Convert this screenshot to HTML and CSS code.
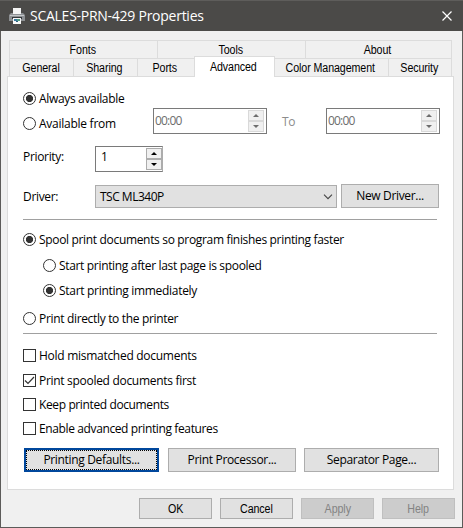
FILE: index.html
```html
<!DOCTYPE html>
<html lang="en">
<head>
<meta charset="utf-8">
<title>SCALES-PRN-429 Properties</title>
<link rel="stylesheet" href="styles.css">
</head>
<body>
<div class="window">
  <header class="titlebar">
    <svg class="printer" width="16" height="16" viewBox="0 0 16 16">
      <rect x="4" y="0" width="8" height="6" fill="#f4f4f4"/>
      <path d="M2 5h2v1h8V5h2l2 2v6H0V7z" fill="#8d9093"/>
      <path d="M1 7h14v1H1z" fill="#c3c5c7"/>
      <rect x="3" y="9" width="10" height="2" fill="#34373a"/>
      <rect x="4" y="10" width="8" height="6" fill="#f7f7f7"/>
      <rect x="5" y="11" width="3" height="2" fill="#3c78a0"/>
      <rect x="8" y="11" width="3" height="2" fill="#4f9b82"/>
      <rect x="7" y="13" width="2" height="1" fill="#2f5f80"/>
    </svg>
    <h1 class="title">SCALES-PRN-429 Properties</h1>
    <svg class="close" width="10" height="10" viewBox="0 0 10 10"><path d="M.5.5l9 9M9.500.5l-9 9" stroke="#fff" stroke-width="1.2"/></svg>
  </header>
  <nav class="tabs">
    <div class="tabrow back">
      <span class="tab"><span class="cap">Fonts</span></span><span class="tab"><span class="cap">Tools</span></span><span class="tab"><span class="cap">About</span></span>
    </div>
    <div class="tabrow front">
      <span class="tab"><span class="cap">General</span></span><span class="tab"><span class="cap">Sharing</span></span><span class="tab"><span class="cap">Ports</span></span><span class="tab active"><span class="cap">Advanced</span></span><span class="tab"><span class="cap">Color Management</span></span><span class="tab"><span class="cap">Security</span></span>
    </div>
  </nav>
  <main class="panel">
    <label class="option"><i class="radio on"></i><span>Always available</span></label>
    <div class="row times">
      <label class="option from"><i class="radio"></i><span>Available from</span></label>
      <div class="time"><span>00:00</span><div class="spin dim"><b class="up"></b><b class="down"></b></div></div>
      <span class="to">To</span>
      <div class="time"><span>00:00</span><div class="spin dim"><b class="up"></b><b class="down"></b></div></div>
    </div>
    <div class="row priority">
      <span class="name">Priority:</span>
      <div class="number"><span>1</span><div class="spin"><b class="up"></b><b class="down"></b></div></div>
    </div>
    <div class="row driver">
      <span class="name">Driver:</span>
      <div class="select"><span>TSC ML340P</span><svg width="10" height="6" viewBox="0 0 10 6"><path d="M1 .7l4 4 4-4" fill="none" stroke="#444" stroke-width="1.1"/></svg></div>
      <button class="btn new"><span>New Driver...</span></button>
    </div>
    <hr class="rule">
    <label class="option spool"><i class="radio on"></i><span>Spool print documents so program finishes printing faster</span></label>
    <label class="option sub last"><i class="radio"></i><span>Start printing after last page is spooled</span></label>
    <label class="option sub now"><i class="radio on"></i><span>Start printing immediately</span></label>
    <label class="option direct"><i class="radio"></i><span>Print directly to the printer</span></label>
    <hr class="rule second">
    <label class="option hold"><i class="check"></i><span>Hold mismatched documents</span></label>
    <label class="option first"><i class="check"><svg width="11" height="11" viewBox="0 0 11 11"><path d="M1 5.500l3 3 6-6.500" fill="none" stroke="#333" stroke-width="1.2"/></svg></i><span>Print spooled documents first</span></label>
    <label class="option keep"><i class="check"></i><span>Keep printed documents</span></label>
    <label class="option keep advanced"><i class="check"></i><span>Enable advanced printing features</span></label>
    <div class="row actions">
      <button class="btn default"><span>Printing Defaults...</span></button>
      <button class="btn processor"><span>Print Processor...</span></button>
      <button class="btn separator"><span>Separator Page...</span></button>
    </div>
  </main>
  <footer class="footer">
    <button class="btn"><span class="cap">OK</span></button>
    <button class="btn"><span class="cap">Cancel</span></button>
    <button class="btn" disabled><span class="cap">Apply</span></button>
    <button class="btn" disabled><span class="cap">Help</span></button>
  </footer>
</div>
</body>
</html>
```
FILE: styles.css
```css
* { box-sizing: border-box; }
body { margin: 0; font: 12px/14px "Open Sans", "Noto Sans", sans-serif; letter-spacing: -0.33px; color: #000; }
span { white-space: nowrap; }
.window { width: 463px; height: 528px; background: #f0f0f0; border: 1px solid #5c5b59; border-top: 0; display: flex; flex-direction: column; }
.titlebar { height: 31px; flex: none; margin: 0 -1px; background: #4b4a48; border-top: 1px solid #5e5d5b; display: flex; align-items: center; padding: 0 11px 0 9px; }
.title { flex: 1; margin: 0 0 0 5px; font-size: 14px; font-weight: 400; letter-spacing: -0.26px; color: #fff; }
.close, .printer { flex: none; display: block; }

.tabs { margin: 9px 10px 0 8px; }
.tabrow { display: grid; height: 18px; }
.back { grid-template-columns: 148px 148px 147px; }
.back .tab { padding-right: 2px; }
.front { grid-template-columns: 64px 64px 57px 80px 114px 64px; }
.front .tab { padding-right: 2px; }
.tab { display: flex; align-items: center; justify-content: center; border: solid #dcdcdc; border-width: 1px 0 0 1px; }
.tab:last-child { border-right-width: 1px; }
.cap { display: inline-block; font-family: "Liberation Sans", sans-serif; letter-spacing: -0.1px; transform: scaleX(.89); }
.front .tab.active { position: relative; margin: -2px -1px -1px 0; padding-right: 3px; background: #fff; border-right-width: 1px; }

.panel { width: 447px; height: 414px; margin-left: 6px; padding: 15px 0 0 15px; border: 1px solid #dcdcdc; background: #fff; flex: none; }
.option { display: flex; align-items: center; height: 13px; gap: 3px; }
.radio { width: 13px; height: 13px; flex: none; border: 1px solid #333; border-radius: 50%; display: block; }
.radio.on { background: radial-gradient(circle, #333 3.3px, transparent 3.9px); }
.check { width: 13px; height: 13px; flex: none; border: 1px solid #333; display: block; }
.check svg { display: block; }
.row { display: flex; }
.times { margin-top: 3px; height: 26px; }
.from { width: 130px; margin-top: 9px; letter-spacing: -0.26px; }
.time { width: 114px; height: 26px; border: 1px solid #7a7a7a; display: flex; justify-content: space-between; padding: 1px 2px 0 1px; color: #6d6d6d; letter-spacing: -0.8px; }
.time > span { margin-top: 4px; }
.to { width: 59px; padding: 7px 0 0 15px; color: #8c8c8c; }
.spin { width: 16px; height: 22px; background: #f0f0f0; display: grid; grid-template-rows: 1fr 1fr; }
.spin b { border: 1px solid #acacac; background: #f0f0f0; display: grid; place-items: center; }
.spin b::before { content: ""; border: solid transparent; border-width: 0 3px 3px; border-bottom-color: #000; }
.spin b.down::before { border-width: 3px 3px 0; border-top-color: #000; }
.spin.dim b { border-color: #d9d9d9; }
.spin.dim b::before { border-bottom-color: #6d6d6d; }
.spin.dim b.down::before { border-top-color: #6d6d6d; }
.priority { margin-top: 12px; height: 26px; }
.name { width: 72px; padding-top: 4px; }
.number { width: 68px; height: 26px; border: 1px solid #7a7a7a; border-right-color: #acacac; display: flex; justify-content: space-between; padding: 1px 0 1px 5px; }
.number > span { margin-top: 2px; }
.driver { margin-top: 12px; height: 24px; }
.driver .name { padding-top: 6px; }
.select { width: 242px; height: 23px; margin-top: 1px; background: #e1e1e1; border: 1px solid #adadad; display: flex; align-items: center; justify-content: space-between; padding: 0 3px 0 4px; letter-spacing: -0.5px; }
.btn { font: inherit; letter-spacing: inherit; color: #000; height: 24px; padding: 0; background: #e1e1e1; border: 1px solid #adadad; }
.new { width: 98px; margin-left: 4px; }
.rule { width: 414px; height: 1px; border: 0; background: #a0a0a0; margin: 11px 0 13px; }
.last { margin-top: 13px; }
.sub { margin-left: 20px; }
.now { margin-top: 12px; letter-spacing: -0.3px; }
.direct { margin-top: 15px; }
.second { margin: 8px 0 15px; }
.hold { letter-spacing: -0.28px; }
.first { margin-top: 12px; letter-spacing: -0.3px; }
.keep { margin-top: 11px; letter-spacing: -0.38px; }
.actions { margin-top: 13px; padding-left: 1px; }
.default { width: 135px; border: 2px solid #00479c; outline: 1px dotted #000; outline-offset: -3px; }
.processor { width: 128px; margin-left: 9px; }
.separator { width: 135px; margin-left: 8px; }
.footer { display: flex; justify-content: flex-end; gap: 8px; margin: 8px 7px 0 0; }
.footer .btn { width: 73px; height: 21px; }
.footer .btn:disabled { background: #ccc; border-color: #bfbfbf; color: #838383; }
```
